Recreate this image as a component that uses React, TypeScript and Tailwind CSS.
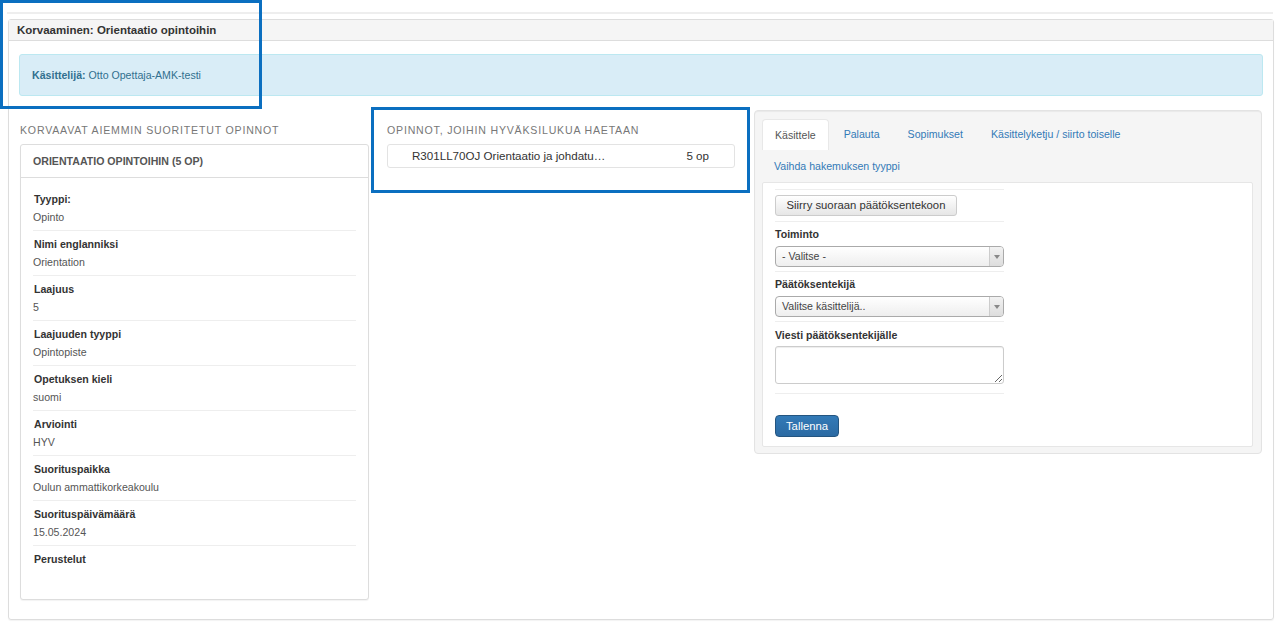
const details = [
  { label: 'Tyyppi:', value: 'Opinto' },
  { label: 'Nimi englanniksi', value: 'Orientation' },
  { label: 'Laajuus', value: '5' },
  { label: 'Laajuuden tyyppi', value: 'Opintopiste' },
  { label: 'Opetuksen kieli', value: 'suomi' },
  { label: 'Arviointi', value: 'HYV' },
  { label: 'Suorituspaikka', value: 'Oulun ammattikorkeakoulu' },
  { label: 'Suorituspäivämäärä', value: '15.05.2024' },
  { label: 'Perustelut', value: '' },
];

const tabs = ['Käsittele', 'Palauta', 'Sopimukset', 'Käsittelyketju / siirto toiselle'];

const Select = ({ text }: { text: string }) => (
  <div className="flex h-[21px] w-[229px] items-stretch overflow-hidden rounded-[4px] border border-[#aaa] bg-gradient-to-b from-white to-[#eee]">
    <span className="flex-1 truncate pl-[6px] leading-[19px] text-[#444]">{text}</span>
    <span className="flex w-[14px] items-center justify-center border-l border-[#ccc] bg-gradient-to-b from-[#f2f2f2] to-[#ddd]">
      <span className="h-0 w-0 border-x-[3px] border-t-[4px] border-x-transparent border-t-[#888]" />
    </span>
  </div>
);

const App = () => {
  return (
    <div
      className="relative h-[623px] w-[1280px] overflow-hidden bg-white text-[10.6px] text-[#333]"
      style={{ fontFamily: '"Liberation Sans", Arial, sans-serif' }}
    >
      <div className="mx-[7px] mt-[12px] h-[2px] bg-[#eee]" />

      {/* Main panel */}
      <div className="ml-[8px] mt-[5px] w-[1266px] rounded-[3px] border border-[#ddd] shadow-[0_1px_1px_rgba(0,0,0,0.05)]">
        <div className="h-[21px] border-b border-[#ddd] bg-[#f5f5f5] px-[8px] text-[11.5px] font-bold leading-[21px] text-[#333]">
          Korvaaminen: Orientaatio opintoihin
        </div>

        <div className="px-[10px] pb-[19px] pt-[13px]">
          <div className="h-[42px] rounded-[3px] border border-[#bce8f1] bg-[#d9edf7] pl-[12px] leading-[40px] text-[#31708f]">
            <span className="font-bold">Käsittelijä:</span> Otto Opettaja-AMK-testi
          </div>

          <div className="mt-[14px] flex items-start">
            {/* Left column */}
            <div className="ml-[1px] w-[349px]">
              <div className="mt-[11px] h-[18px] leading-[18px] tracking-[0.8px] text-[#777]">
                KORVAAVAT AIEMMIN SUORITETUT OPINNOT
              </div>
              <div className="mt-[5px] rounded-[3px] border border-[#ddd] bg-white shadow-[0_1px_1px_rgba(0,0,0,0.05)]">
                <div className="h-[33px] border-b border-[#ddd] px-[12px] font-bold leading-[32px] text-[#555]">
                  ORIENTAATIO OPINTOIHIN (5 OP)
                </div>
                <div className="px-[12px] pb-[9px] pt-[8px]">
                  {details.map((d, i) => (
                    <div
                      key={d.label}
                      className={
                        i < details.length - 1
                          ? 'border-b border-[#eee] pb-[4px] pt-[4px]'
                          : 'pb-[4px] pt-[4px]'
                      }
                    >
                      <div className="h-[18px] pl-[1px] font-bold leading-[18px] text-[#333]">{d.label}</div>
                      <div className="h-[18px] leading-[18px] text-[#555]">{d.value}</div>
                    </div>
                  ))}
                </div>
              </div>
            </div>

            {/* Middle column */}
            <div className="ml-[18px] w-[348px]">
              <div className="mt-[11px] h-[18px] leading-[18px] tracking-[0.8px] text-[#777]">
                OPINNOT, JOIHIN HYVÄKSILUKUA HAETAAN
              </div>
              <div className="mt-[5px] flex h-[24px] items-center rounded-[3px] border border-[#e3e3e3] bg-white text-[11.6px]">
                <span className="box-content w-[196px] truncate pl-[24px] text-[#333]">
                  R301LL70OJ Orientaatio ja johdatus opintoihin
                </span>
                <span className="ml-auto pr-[25px] text-[#333]">5 op</span>
              </div>
            </div>

            {/* Right column */}
            <div className="ml-[19px] w-[508px] rounded-[4px] border border-[#e3e3e3] bg-[#f5f5f5] pb-[6px] pl-[7px] pr-[8px] pt-[8px] shadow-[inset_0_1px_1px_rgba(0,0,0,0.05)]">
              <div className="flex">
                {tabs.map((t, i) => (
                  <div
                    key={t}
                    className={
                      i === 0
                        ? 'mr-[2px] h-[31px] rounded-t-[4px] border border-b-0 border-[#e8e8e8] bg-white px-[12px] leading-[30px] text-[#555]'
                        : 'mr-[2px] h-[31px] px-[13px] leading-[30px] text-[#337ab7]'
                    }
                  >
                    {t}
                  </div>
                ))}
              </div>
              <div className="mt-[7px] h-[18px] px-[12px] leading-[18px] text-[#337ab7]">Vaihda hakemuksen tyyppi</div>

              <div className="mt-[7px] rounded-[2px] border border-[#e6e6e6] bg-white px-[12px] pb-[9px] pt-[6px]">
                <div className="w-[229px]">
                  <div className="border-t border-[#eee] pb-[5px] pt-[5px]">
                    <button className="h-[21px] w-[182px] rounded-[3px] border border-[#ccc] bg-gradient-to-b from-white to-[#e6e6e6] text-[11.3px] leading-[19px] text-[#333]">
                      Siirry suoraan päätöksentekoon
                    </button>
                  </div>

                  <div className="border-t border-[#eee] pb-[4px] pt-[3px]">
                    <div className="mb-[2px] h-[19px] font-bold leading-[19px] text-[#333]">Toiminto</div>
                    <Select text="- Valitse -" />
                  </div>

                  <div className="border-t border-[#eee] pb-[4px] pt-[3px]">
                    <div className="mb-[2px] h-[19px] font-bold leading-[19px] text-[#333]">Päätöksentekijä</div>
                    <Select text="Valitse käsittelijä.." />
                  </div>

                  <div className="border-t border-[#eee] pb-[9px] pt-[4px]">
                    <div className="mb-[2px] h-[18px] font-bold leading-[18px] text-[#333]">Viesti päätöksentekijälle</div>
                    <textarea className="block h-[38px] w-[229px] rounded-[3px] border border-[#ccc] shadow-[inset_0_1px_1px_rgba(0,0,0,0.075)]" />
                  </div>

                  <div className="border-t border-[#eee] pt-[21px]">
                    <button className="h-[22px] w-[64px] rounded-[4px] border border-[#245580] bg-gradient-to-b from-[#337ab7] to-[#2b6aa3] text-[11.3px] leading-[20px] text-white">
                      Tallenna
                    </button>
                  </div>
                </div>
              </div>
            </div>
          </div>
        </div>
      </div>

      {/* Annotation boxes */}
      <div className="pointer-events-none absolute left-0 top-0 h-[109px] w-[262px] border-[3px] border-[#0b6fc0]" />
      <div className="pointer-events-none absolute left-[371px] top-[107px] h-[86px] w-[379px] border-[3px] border-[#0b6fc0]" />
    </div>
  );
};

export default App;
